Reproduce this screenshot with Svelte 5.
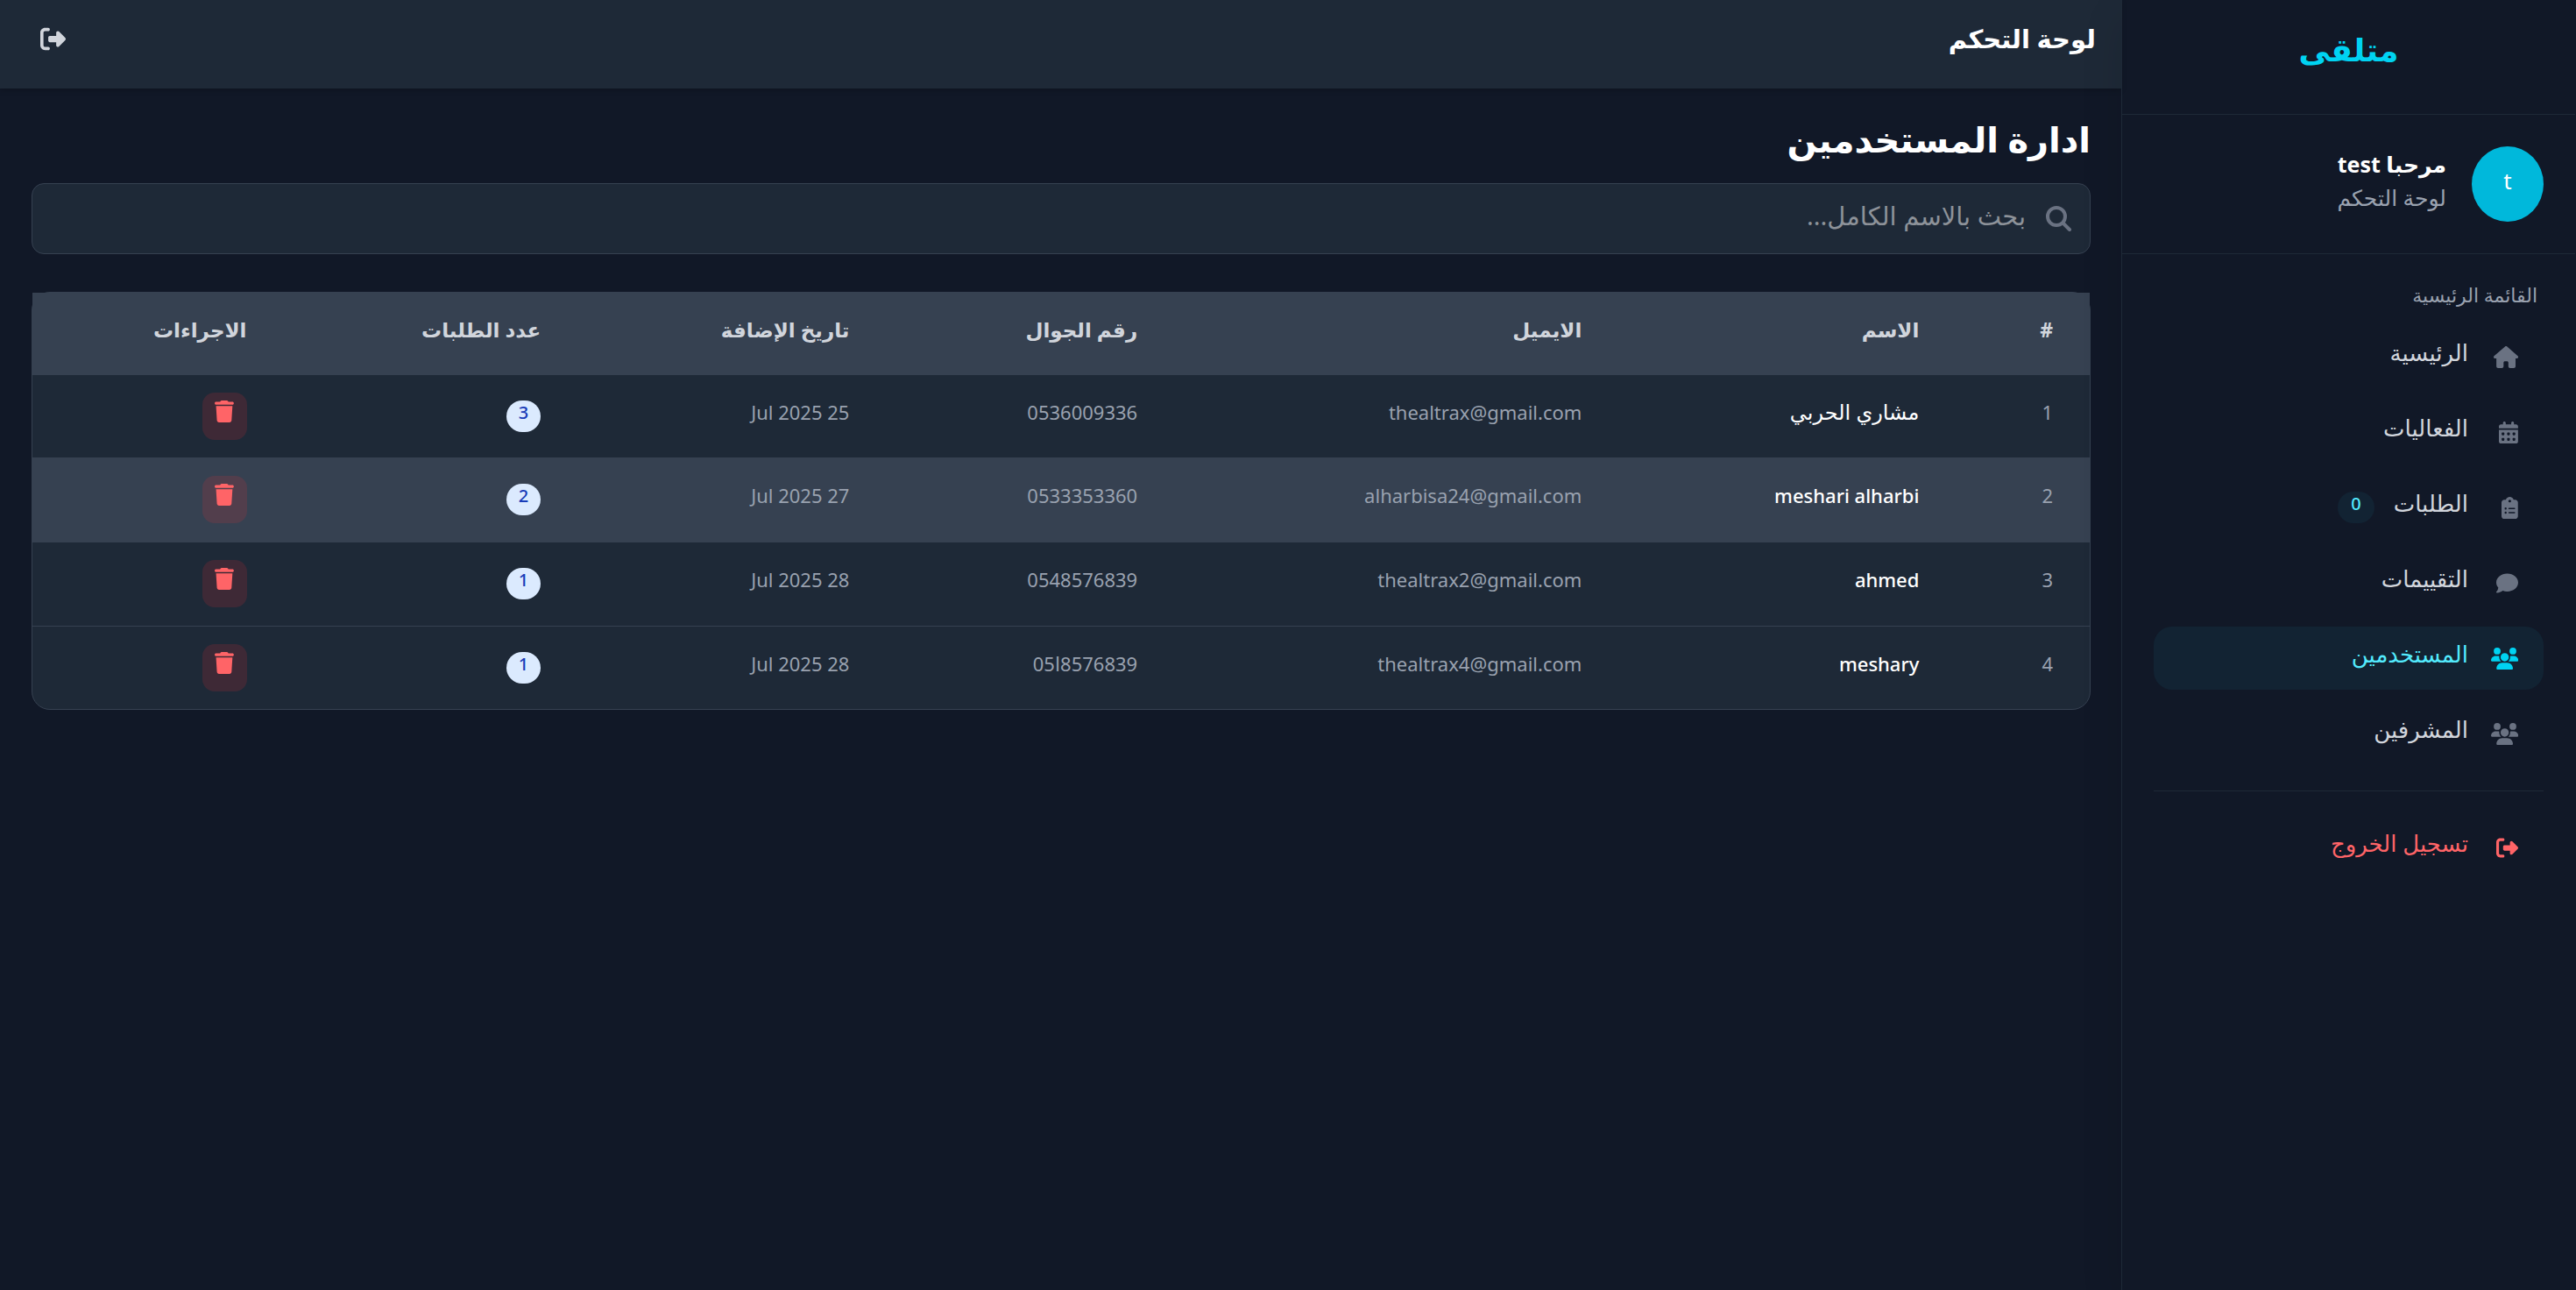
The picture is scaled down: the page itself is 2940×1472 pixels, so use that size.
<script>
  const icons = {
    home: { w: 576, d: 'M575.8 255.5c0 18-15 32.1-32 32.1h-32l.7 160.2c0 2.700-.2 5.400-.5 8.100V472c0 22.100-17.900 40-40 40h-88c-22.100 0-40-17.900-40-40v-88c0-17.700-14.300-32-32-32h-48c-17.700 0-32 14.300-32 32v88c0 22.100-17.900 40-40 40h-88c-22.100 0-40-17.900-40-40V287.600H32c-18 0-32-14-32-32.100 0-9 3-17 10-24L266.400 8c7-7 15-8 22-8s15 2 21 7l255.400 224.500c8 7 12 15 11 24z' },
    calendar: { w: 448, d: 'M128 0c17.700 0 32 14.300 32 32v32h128V32c0-17.700 14.300-32 32-32s32 14.300 32 32v32h48c26.500 0 48 21.500 48 48v48H0v-48c0-26.500 21.500-48 48-48h48V32c0-17.700 14.300-32 32-32zM0 192h448v272c0 26.500-21.500 48-48 48H48c-26.500 0-48-21.500-48-48V192zm64 80v32c0 8.800 7.200 16 16 16h32c8.800 0 16-7.200 16-16v-32c0-8.800-7.200-16-16-16H80c-8.800 0-16 7.200-16 16zm128 0v32c0 8.800 7.200 16 16 16h32c8.800 0 16-7.200 16-16v-32c0-8.800-7.200-16-16-16h-32c-8.800 0-16 7.200-16 16zm144-16c-8.800 0-16 7.200-16 16v32c0 8.800 7.200 16 16 16h32c8.800 0 16-7.200 16-16v-32c0-8.800-7.200-16-16-16h-32zM64 400v32c0 8.800 7.200 16 16 16h32c8.800 0 16-7.200 16-16v-32c0-8.800-7.200-16-16-16H80c-8.800 0-16 7.200-16 16zm144-16c-8.800 0-16 7.200-16 16v32c0 8.800 7.200 16 16 16h32c8.800 0 16-7.200 16-16v-32c0-8.800-7.200-16-16-16h-32zm112 16v32c0 8.800 7.200 16 16 16h32c8.800 0 16-7.200 16-16v-32c0-8.800-7.200-16-16-16h-32c-8.800 0-16 7.200-16 16z' },
    clipboard: { w: 384, d: 'M192 0c-41.800 0-77.400 26.700-90.500 64H64C28.700 64 0 92.700 0 128v320c0 35.300 28.700 64 64 64h256c35.300 0 64-28.700 64-64V128c0-35.300-28.700-64-64-64h-37.500C269.400 26.700 233.800 0 192 0zm0 64a32 32 0 1 1 0 64 32 32 0 1 1 0-64zM72 272a24 24 0 1 1 48 0 24 24 0 1 1-48 0zm104-16h128c8.800 0 16 7.200 16 16s-7.200 16-16 16H176c-8.800 0-16-7.200-16-16s7.200-16 16-16zM72 368a24 24 0 1 1 48 0 24 24 0 1 1-48 0zm88 0c0-8.800 7.200-16 16-16h128c8.800 0 16 7.200 16 16s-7.200 16-16 16H176c-8.800 0-16-7.200-16-16z' },
    comment: { w: 512, d: 'M512 240c0 114.900-114.600 208-256 208-37.100 0-72.300-6.400-104.100-17.900-11.900 8.700-31.300 20.600-54.300 30.600C73.600 471.100 44.700 480 16 480c-6.500 0-12.300-3.900-14.800-9.900s-1.100-12.800 3.400-17.400l.3-.3c.3-.3.7-.7 1.300-1.400 1.100-1.200 2.800-3.100 4.900-5.700 4.100-5 9.600-12.400 15.200-21.600 10-16.600 19.500-38.400 21.400-62.900C17.700 326.800 0 285.100 0 240 0 125.100 114.600 32 256 32s256 93.100 256 208z' },
    users: { w: 640, d: 'M144 0a80 80 0 1 1 0 160A80 80 0 1 1 144 0zm368 0a80 80 0 1 1 0 160 80 80 0 1 1 0-160zM0 298.700C0 239.800 47.800 192 106.700 192h42.700c15.900 0 31 3.500 44.600 9.700-1.300 7.200-1.900 14.700-1.900 22.300 0 38.200 16.800 72.500 43.300 96H21.300C9.600 320 0 310.400 0 298.700zM405.300 320h-.7c26.600-23.500 43.300-57.800 43.300-96 0-7.600-.7-15-1.900-22.300 13.600-6.300 28.700-9.700 44.600-9.700h42.700c58.900 0 106.700 47.800 106.700 106.700 0 11.800-9.600 21.300-21.300 21.300H405.300zM224 224a96 96 0 1 1 192 0 96 96 0 1 1-192 0zM128 485.300C128 411.700 187.700 352 261.300 352h117.300C452.300 352 512 411.700 512 485.300c0 14.700-11.900 26.700-26.700 26.700H154.600c-14.700 0-26.700-11.900-26.700-26.700z' },
    exit: { w: 512, d: 'M377.900 105.900 500.700 228.700c7.200 7.200 11.300 17.100 11.300 27.300s-4.100 20.100-11.300 27.300L377.900 406.100c-6.400 6.400-15 9.900-24 9.900-18.700 0-33.900-15.200-33.900-33.900V320H192c-17.700 0-32-14.300-32-32v-64c0-17.700 14.300-32 32-32h128v-62.100c0-18.700 15.200-33.900 33.900-33.900 9 0 17.600 3.600 24 9.900zM160 96H96c-17.700 0-32 14.300-32 32v256c0 17.700 14.300 32 32 32h64c17.700 0 32 14.300 32 32s-14.300 32-32 32H96c-53 0-96-43-96-96V128c0-53 43-96 96-96h64c17.700 0 32 14.300 32 32s-14.300 32-32 32z' },
    trash: { w: 448, d: 'M135.200 17.700C140.600 6.800 151.700 0 163.800 0h120.400c12.100 0 23.200 6.800 28.600 17.700L320 32h96c17.700 0 32 14.300 32 32s-14.300 32-32 32H32C14.300 96 0 81.700 0 64s14.300-32 32-32h96l7.200-14.300zM32 128h384l-21.200 339c-1.600 25.300-22.600 45-47.900 45H101.100c-25.300 0-46.300-19.700-47.900-45L32 128z' }
  };

  const nav = [
    { label: 'الرئيسية', icon: 'home' },
    { label: 'الفعاليات', icon: 'calendar' },
    { label: 'الطلبات', icon: 'clipboard', badge: '0' },
    { label: 'التقييمات', icon: 'comment' },
    { label: 'المستخدمين', icon: 'users', active: true },
    { label: 'المشرفين', icon: 'users' }
  ];

  const columns = [
    { key: 'id', label: '#' },
    { key: 'name', label: 'الاسم' },
    { key: 'email', label: 'الايميل' },
    { key: 'phone', label: 'رقم الجوال' },
    { key: 'date', label: 'تاريخ الإضافة' },
    { key: 'orders', label: 'عدد الطلبات' },
    { key: 'actions', label: 'الاجراءات' }
  ];

  const users = [
    { id: 1, name: 'مشاري الحربي', lang: 'ar', email: 'thealtrax@gmail.com', phone: '0536009336', date: '25 Jul 2025', orders: 3 },
    { id: 2, name: 'meshari alharbi', lang: 'en', email: 'alharbisa24@gmail.com', phone: '0533353360', date: '27 Jul 2025', orders: 2, hover: true },
    { id: 3, name: 'ahmed', lang: 'en', email: 'thealtrax2@gmail.com', phone: '0548576839', date: '28 Jul 2025', orders: 1 },
    { id: 4, name: 'meshary', lang: 'en', email: 'thealtrax4@gmail.com', phone: '8576839ا05', date: '28 Jul 2025', orders: 1 }
  ];

  let query = $state('');
</script>

{#snippet icon(name)}
  <svg class="icon" viewBox="0 0 {icons[name].w} 512" aria-hidden="true"><path d={icons[name].d} /></svg>
{/snippet}

<div class="app" dir="rtl" lang="ar">
  <aside class="sidebar">
    <div class="brand"><a href="#home">متلقى</a></div>

    <div class="profile">
      <div class="avatar"><span>t</span></div>
      <div class="who">
        <strong>مرحبا test</strong>
        <span>لوحة التحكم</span>
      </div>
    </div>

    <nav class="menu">
      <h2>القائمة الرئيسية</h2>
      <ul>
        {#each nav as item}
          <li>
            <a href="#section" class="item" class:active={item.active}>
              <span class="slot">{@render icon(item.icon)}</span>
              <span class="label">{item.label}</span>
              {#if item.badge}<span class="count"><span>{item.badge}</span></span>{/if}
            </a>
          </li>
        {/each}
      </ul>
      <div class="leave">
        <button type="button" class="item">
          <span class="slot">{@render icon('exit')}</span>
          <span class="label">تسجيل الخروج</span>
        </button>
      </div>
    </nav>
  </aside>

  <div class="content">
    <header class="topbar">
      <h2>لوحة التحكم</h2>
      <button type="button" aria-label="تسجيل الخروج">{@render icon('exit')}</button>
    </header>

    <main>
      <h1>ادارة المستخدمين</h1>

      <label class="search">
        <svg viewBox="0 0 30 30" aria-hidden="true"><circle cx="12" cy="12" r="10" /><path d="M19.500 19.500 27 27" /></svg>
        <input type="text" placeholder="بحث بالاسم الكامل..." aria-label="بحث بالاسم الكامل" bind:value={query} />
      </label>

      <div class="card">
        <table>
          <colgroup>
            {#each columns as col}<col class="c-{col.key}" />{/each}
          </colgroup>
          <thead>
            <tr>
              {#each columns as col}<th scope="col"><span class="text">{col.label}</span></th>{/each}
            </tr>
          </thead>
          <tbody>
            {#each users as user}
              <tr class:hover={user.hover}>
                <td><span class="text">{user.id}</span></td>
                <td class="name" class:arabic={user.lang === 'ar'}><span class="text">{user.name}</span></td>
                <td><span class="text">{user.email}</span></td>
                <td><span class="text">{user.phone}</span></td>
                <td><span class="text">{user.date}</span></td>
                <td><span class="orders"><span>{user.orders}</span></span></td>
                <td><button type="button" class="remove" aria-label="حذف">{@render icon('trash')}</button></td>
              </tr>
            {/each}
          </tbody>
        </table>
      </div>
    </main>
  </div>
</div>

<style>
  :global(body) {
    background: #111827;
  }

  .app {
    --page: #111827;
    --panel: #1e2937;
    --line: #364151;
    --muted: #99a1af;
    --soft: #d1d5dc;
    display: flex;
    min-height: 100vh;
    background: var(--page);
    color: #fff;
    font-family: 'Noto Sans', 'DejaVu Sans', sans-serif;
    font-size: 22px;
    line-height: 36px;
  }

  .app *,
  .app {
    box-sizing: border-box;
  }

  h1,
  h2,
  ul {
    margin: 0;
    padding: 0;
    list-style: none;
  }

  a {
    color: inherit;
    text-decoration: none;
  }

  button {
    font: inherit;
    color: inherit;
    background: none;
    border: 0;
    padding: 0;
    cursor: pointer;
  }

  .icon {
    display: block;
    height: 25px;
    fill: currentColor;
  }

  .sidebar {
    flex: none;
    width: 519px;
    padding-right: 1px;
    border-left: 1px solid var(--panel);
    box-shadow: 0 18px 45px rgba(0, 0, 0, 0.1);
    z-index: 1;
  }

  .brand {
    padding: 28px 36px 44px;
    border-bottom: 1px solid var(--panel);
    text-align: center;
    color: #00d3f2;
    font-size: 36px;
    font-weight: 700;
    line-height: 58px;
  }

  .profile {
    display: flex;
    align-items: center;
    gap: 29px;
    padding: 36px 36px 36px;
    border-bottom: 1px solid var(--panel);
  }

  .avatar {
    display: grid;
    place-items: center;
    width: 82px;
    height: 86px;
    padding-bottom: 8px;
    border-radius: 50%;
    background: #00b8db;
    font-size: 26px;
  }

  .who {
    display: flex;
    flex-direction: column;
    padding-bottom: 8px;
    line-height: 38px;
  }

  .who strong {
    font-size: 25px;
  }

  .who span {
    color: var(--muted);
    font-size: 25px;
  }

  .menu {
    padding: 28px 36px;
  }

  .menu h2 {
    padding: 0 7px 17px;
    color: var(--muted);
    font-size: 22px;
    font-weight: 400;
    line-height: 36px;
  }

  .menu ul {
    display: flex;
    flex-direction: column;
    gap: 14px;
  }

  .item {
    display: flex;
    align-items: center;
    width: 100%;
    height: 72px;
    padding: 0 29px;
    border-radius: 21px;
    color: var(--soft);
  }

  .slot {
    width: 57px;
    color: #6a7282;
  }

  .label {
    padding-bottom: 10px;
    font-size: 26px;
    font-weight: 500;
  }

  .active {
    background: #122333;
    color: #53eafd;
  }

  .active .slot {
    color: #00d3f2;
  }

  .count {
    margin-right: 22px;
    padding: 0 15px 8px;
    border-radius: 18px;
    background: #122333;
    color: #53eafd;
    font-size: 20px;
    line-height: 28px;
    font-weight: 500;
  }

  .leave {
    margin-top: 29px;
    padding-top: 28px;
    border-top: 1px solid var(--panel);
  }

  .leave .item,
  .leave .slot {
    color: #ff6467;
  }

  .content {
    flex: 1;
    min-width: 0;
  }

  .topbar {
    display: flex;
    align-items: center;
    justify-content: space-between;
    height: 101px;
    padding: 0 29px 13px 46px;
    background: var(--panel);
    box-shadow: 0 2px 6px rgba(0, 0, 0, 0.2);
  }

  .topbar h2 {
    font-size: 29px;
    font-weight: 700;
  }

  .topbar button {
    color: var(--soft);
  }

  .topbar .icon {
    height: 29px;
  }

  main {
    padding: 29px 35px 36px 36px;
  }

  h1 {
    padding-bottom: 22px;
    font-size: 40px;
    font-weight: 700;
    line-height: 57px;
  }

  .search {
    display: flex;
    align-items: center;
    gap: 23px;
    height: 81px;
    padding: 0 20px;
    border: 1px solid var(--line);
    border-radius: 14px;
    background: var(--panel);
  }

  .search svg {
    width: 30px;
    height: 30px;
    fill: none;
    stroke: #6a7282;
    stroke-width: 4;
    stroke-linecap: round;
  }

  .search input {
    flex: 1;
    min-width: 0;
    height: 60px;
    padding: 0 0 8px;
    border: 0;
    outline: 0;
    background: none;
    color: #fff;
    font: inherit;
    font-size: 29px;
  }

  .search input::placeholder {
    color: #8d9299;
    opacity: 1;
  }

  .card {
    margin-top: 43px;
    border: 1px solid var(--line);
    border-radius: 21px;
    background: var(--panel);
  }

  table {
    width: 100%;
    table-layout: fixed;
    border-collapse: collapse;
  }

  .c-id {
    width: 6.5%;
  }

  .c-name {
    width: 16.4%;
  }

  .c-email {
    width: 21.6%;
  }

  .c-phone {
    width: 14%;
  }

  .c-date {
    width: 15%;
  }

  .c-orders {
    width: 14.3%;
  }

  th,
  td {
    height: 94px;
    padding: 0 42px;
    text-align: right;
    vertical-align: middle;
    color: var(--muted);
  }

  th {
    background: var(--line);
    color: var(--soft);
    font-size: 23px;
    font-weight: 700;
  }

  tbody tr + tr td {
    height: 96px;
    border-top: 1px solid var(--line);
  }

  tbody tr:last-child td {
    height: 95px;
  }

  .hover {
    background: var(--line);
  }

  .text {
    display: block;
    padding-bottom: 10px;
    white-space: nowrap;
  }

  td.name {
    color: #fff;
    font-weight: 500;
  }

  td.arabic {
    font-size: 24px;
  }

  .orders {
    display: block;
    width: fit-content;
    padding: 0 14px 8px;
    border-radius: 18px;
    background: #dbeafe;
    color: #193cb8;
    font-size: 20px;
    font-weight: 500;
    line-height: 28px;
  }

  .remove {
    display: block;
    padding: 9px 15px 20px 14px;
    border-radius: 14px;
    background: rgba(251, 44, 54, 0.15);
    color: #ff6467;
  }
</style>
